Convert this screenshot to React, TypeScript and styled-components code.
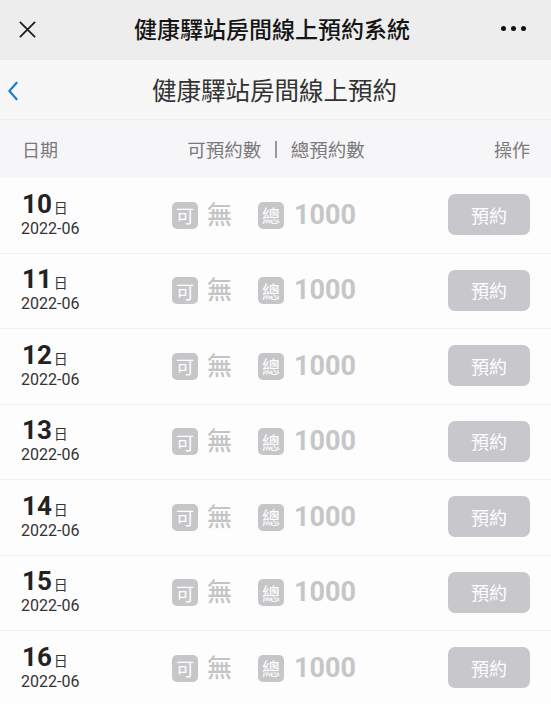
import React from "react";
import styled, { createGlobalStyle } from "styled-components";

const GlobalStyle = createGlobalStyle`
  html, body {
    margin: 0;
    padding: 0;
    background: #fdfdfe;
  }
  body {
    font-family: Roboto, "Noto Sans CJK TC", "Noto Sans", sans-serif;
  }
`;

const days = [10, 11, 12, 13, 14, 15, 16];

export default function App() {
  return (
    <>
      <GlobalStyle />
      <Page>
        <TopBar>
          <CloseIcon viewBox="0 0 20 20">
            <path d="M2 2 L18 18 M18 2 L2 18" stroke="#1a1a1a" strokeWidth="1.8" fill="none" />
          </CloseIcon>
          <TopTitle>健康驛站房間線上預約系統</TopTitle>
          <MoreDots>
            <Dot />
            <Dot />
            <Dot />
          </MoreDots>
        </TopBar>

        <NavBar>
          <BackIcon viewBox="0 0 12 22">
            <path d="M10 2 L2 11 L10 20" stroke="#1f7ad1" strokeWidth="2.4" fill="none" strokeLinecap="round" strokeLinejoin="round" />
          </BackIcon>
          <NavTitle>健康驛站房間線上預約</NavTitle>
        </NavBar>

        <HeaderRow>
          <HeaderCell>日期</HeaderCell>
          <HeaderCenter>
            <span>可預約數</span>
            <HeaderBar />
            <span>總預約數</span>
          </HeaderCenter>
          <HeaderCell>操作</HeaderCell>
        </HeaderRow>

        {days.map((d) => (
          <Row key={d}>
            <DateCol>
              <DayLine>
                <DayNum>{d}</DayNum>
                <DayUnit>日</DayUnit>
              </DayLine>
              <Month>2022-06</Month>
            </DateCol>
            <CountCol>
              <Tag>可</Tag>
              <NoneText>無</NoneText>
              <Tag $gap>總</Tag>
              <TotalNum>1000</TotalNum>
            </CountCol>
            <BookButton disabled>預約</BookButton>
          </Row>
        ))}
      </Page>
    </>
  );
}

const Page = styled.div`
  width: 551px;
  height: 704px;
  overflow: hidden;
  background: #fdfdfe;
`;

const TopBar = styled.div`
  height: 60px;
  background-color: #ededed;
  display: flex;
  align-items: center;
  justify-content: space-between;
  padding: 0 25px 0 18px;
`;

const CloseIcon = styled.svg`
  width: 19px;
  height: 19px;
  margin-top: -2px;
`;

const TopTitle = styled.div`
  font-size: 23px;
  font-weight: 500;
  color: #151515;
  margin-left: 6px;
  margin-top: -4px;
`;

const MoreDots = styled.div`
  display: flex;
  gap: 5px;
  margin-top: -4px;
`;

const Dot = styled.span`
  width: 5px;
  height: 5px;
  border-radius: 50%;
  background: #111;
`;

const NavBar = styled.div`
  height: 60px;
  background-color: #f7f7f7;
  border-bottom: 1px solid #eeeeee;
  box-sizing: border-box;
  display: flex;
  align-items: center;
  padding-left: 7px;
`;

const BackIcon = styled.svg`
  width: 12px;
  height: 20px;
  margin-top: 2px;
`;

const NavTitle = styled.div`
  flex: 1;
  text-align: center;
  font-size: 24.5px;
  color: #333;
  margin-right: 19px;
  margin-left: -2px;
`;

const HeaderRow = styled.div`
  height: 58px;
  background-color: #f6f5f8;
  display: flex;
  align-items: center;
  justify-content: space-between;
  padding: 0 21px 0 22px;
  font-size: 18px;
  color: #7a7a7a;
`;

const HeaderCell = styled.div`
  white-space: nowrap;
`;

const HeaderCenter = styled.div`
  display: flex;
  align-items: center;
  gap: 14px;
  white-space: nowrap;
  font-size: 18.5px;
`;

const HeaderBar = styled.span`
  width: 1.5px;
  height: 17px;
  background: #999;
`;

const Row = styled.div`
  height: 75.5px;
  box-sizing: border-box;
  border-bottom: 1px solid #efefef;
  display: flex;
  align-items: center;
  padding: 0 21px 0 21px;
  background: #fdfdfe;
`;

const DateCol = styled.div`
  width: 151px;
  display: flex;
  flex-direction: column;
  margin-top: -2px;
`;

const DayLine = styled.div`
  display: flex;
  align-items: baseline;
  height: 28px;
  line-height: 28px;
`;

const DayNum = styled.span`
  font-size: 26px;
  font-weight: 700;
  color: #222;
  padding-left: 1px;
`;

const DayUnit = styled.span`
  font-size: 14px;
  color: #333;
  margin-left: 2px;
`;

const Month = styled.div`
  font-size: 16px;
  color: #333;
  line-height: 21px;
`;

const CountCol = styled.div`
  flex: 1;
  display: flex;
  align-items: center;
`;

const Tag = styled.span<{ $gap?: boolean }>`
  width: 26px;
  height: 27px;
  border-radius: 5px;
  background: #c6c6c8;
  color: #fff;
  font-size: 18px;
  display: flex;
  align-items: center;
  justify-content: center;
  margin-left: ${(p) => (p.$gap ? "26px" : "0")};
`;

const NoneText = styled.span`
  font-size: 25px;
  font-weight: 500;
  color: #c4c4c6;
  margin-left: 9px;
  line-height: 27px;
`;

const TotalNum = styled.span`
  font-size: 27px;
  font-weight: 700;
  color: #c6c6c8;
  margin-left: 10px;
  line-height: 27px;
`;

const BookButton = styled.button`
  width: 82px;
  height: 41px;
  border: none;
  border-radius: 7px;
  background-color: #c8c7cb;
  color: #fff;
  font-family: Roboto, "Noto Sans CJK TC", sans-serif;
  font-size: 18px;
  padding: 0;
  margin-top: -1px;
`;
